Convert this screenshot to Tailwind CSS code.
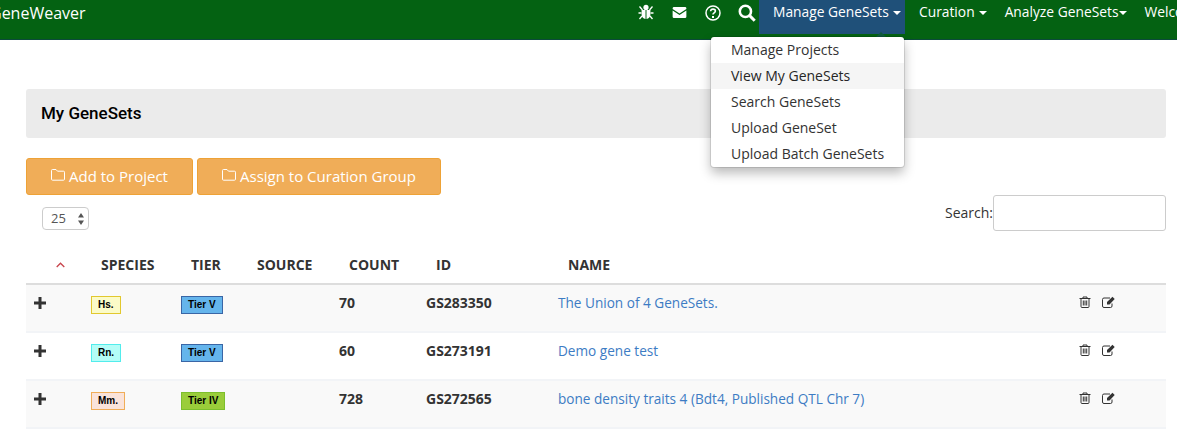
<!DOCTYPE html>
<html lang="en">

<head>
    <meta charset="UTF-8" />
    <title>My GeneSets - GeneWeaver</title>
    <meta name="viewport" content="width=device-width, initial-scale=1.0" />
    <script src="https://cdn.jsdelivr.net/npm/@tailwindcss/browser@4"></script>
</head>

<body class="bg-white text-[#333] font-['Open_Sans',sans-serif] text-sm overflow-hidden h-[429px]">
    <!-- Top navbar -->
    <nav class="relative flex justify-between h-10 bg-[#046212] border-b border-[#0b4a3a] text-white">
        <div class="-ml-[10px] pt-[3px] text-[16px] leading-[20px]">GeneWeaver</div>
        <div class="flex items-start w-[542px] shrink-0 overflow-hidden whitespace-nowrap text-[13.8px]">
            <!-- bug -->
            <svg class="mt-[4px] ml-[3px] w-[16px] h-[16px] shrink-0" viewBox="0 0 16 16" fill="#fff">
                <circle cx="8" cy="3.4" r="2.6" />
                <path d="M3.6 6h3.9v9C5.2 14.800 3.600 12.800 3.600 10.500zM8.500 6h3.900v4.500c0 2.300-1.600 4.300-3.900 4.500z" />
                <path d="M1.500 2.500l3 3.500M14.500 2.500l-3 3.500M.5 9h3M12.500 9h3M1.500 15l2.500-3M14.500 15L12 12" stroke="#fff" stroke-width="1.300" fill="none" />
            </svg>
            <!-- envelope -->
            <svg class="mt-[7px] ml-[18px] w-[15px] h-[11px] shrink-0" viewBox="0 0 15 12" fill="#fff">
                <path d="M1.500 0h12A1.500 1.500 0 0 1 15 1.500v.6L7.500 7 0 2.100v-.6A1.500 1.500 0 0 1 1.500 0z" />
                <path d="M0 3.800l7.500 4.900L15 3.800v6.700a1.500 1.500 0 0 1-1.500 1.500h-12A1.500 1.500 0 0 1 0 10.500z" />
            </svg>
            <!-- question -->
            <svg class="mt-[5px] ml-[18px] w-[16px] h-[16px] shrink-0" viewBox="0 0 16 16" fill="none" stroke="#fff">
                <circle cx="8" cy="8" r="7" stroke-width="1.500" />
                <path d="M5.600 6.300C5.700 4.900 6.700 4.100 8 4.100c1.400 0 2.400.9 2.400 2 0 1.900-2.400 1.800-2.400 3.500" stroke-width="1.600" />
                <path d="M7 11h2v1.900H7z" fill="#fff" stroke="none" />
            </svg>
            <!-- search -->
            <svg class="mt-[4px] ml-[17px] w-[18px] h-[18px] shrink-0" viewBox="0 0 17 17" fill="none" stroke="#fff">
                <circle cx="7" cy="7" r="5.300" stroke-width="2.400" />
                <path d="M11 11l4.800 4.800" stroke-width="2.800" />
            </svg>
            <div class="ml-[3px] flex items-start gap-[4px] h-[34px] w-[146px] pl-[14px] pt-[3px] bg-[#1f5079] leading-[18px] shrink-0">Manage GeneSets
                <span class="mt-[8px] border-x-[4px] border-x-transparent border-t-[4px] border-t-white"></span>
            </div>
            <div class="ml-[14px] flex items-start gap-[4px] pt-[3px] leading-[18px] shrink-0">Curation
                <span class="mt-[8px] border-x-[4px] border-x-transparent border-t-[4px] border-t-white"></span>
            </div>
            <div class="ml-[18px] flex items-start pt-[3px] leading-[18px] shrink-0">Analyze GeneSets
                <span class="mt-[8px] ml-[1px] border-x-[4px] border-x-transparent border-t-[4px] border-t-white"></span>
            </div>
            <div class="ml-[17px] pt-[3px] leading-[18px] shrink-0">Welcome</div>
        </div>

        <!-- Dropdown -->
        <span class="absolute left-[876px] top-[32px] border-x-[5px] border-x-transparent border-b-[5px] border-b-[#0f5a3e]"></span>
        <ul class="absolute left-[711px] top-[37px] w-[193px] h-[130px] bg-white rounded-[3px] shadow-[0_6px_12px_rgba(0,0,0,0.28)] ring-1 ring-black/10 text-[#333] text-sm leading-[26px] z-10">
            <li class="pl-[20px]">Manage Projects</li>
            <li class="pl-[20px] bg-[#f5f5f5] text-[#262626]">View My GeneSets</li>
            <li class="pl-[20px]">Search GeneSets</li>
            <li class="pl-[20px]">Upload GeneSet</li>
            <li class="pl-[20px]">Upload Batch GeneSets</li>
        </ul>
    </nav>

    <main class="pl-[26px] pr-[11px]">
        <div class="mt-[49px] h-[49px] flex items-center pl-[15px] bg-[#ebebeb] rounded-[3px] text-black font-['Roboto',sans-serif] font-medium text-[17px]">My GeneSets</div>

        <!-- Action buttons -->
        <div class="mt-[20px] flex gap-1 text-white text-[15px] font-medium">
            <button class="w-[167px] h-[37px] pt-[1px] flex items-center justify-center gap-[4px] bg-[#f0ad58] border border-[#eea236] rounded-[3px]">
                <svg class="w-[14px] h-[12px] -mt-[4px]" viewBox="0 0 14 12" fill="none" stroke="#fff"><path d="M1.500.5h3.500l1.500 1.700h6a1 1 0 0 1 1 1v7a1 1 0 0 1-1 1h-11a1 1 0 0 1-1-1v-8.700a1 1 0 0 1 1-1z" /></svg>
                Add to Project
            </button>
            <button class="w-[244px] h-[37px] pt-[1px] flex items-center justify-center gap-[4px] bg-[#f0ad58] border border-[#eea236] rounded-[3px]">
                <svg class="w-[14px] h-[12px] -mt-[4px]" viewBox="0 0 14 12" fill="none" stroke="#fff"><path d="M1.500.5h3.500l1.500 1.700h6a1 1 0 0 1 1 1v7a1 1 0 0 1-1 1h-11a1 1 0 0 1-1-1v-8.700a1 1 0 0 1 1-1z" /></svg>
                Assign to Curation Group
            </button>
        </div>

        <!-- Length and search -->
        <div class="flex justify-between h-[36px]">
            <div class="mt-[12px] ml-[16px] w-[47px] h-[23px] flex items-center justify-between pl-[8px] pr-[4px] border border-[#ccc] rounded-[4px] text-[#555] text-[13px]">25
                <svg class="w-[6px] h-[12px]" viewBox="0 0 6 12" fill="#555"><path d="M3 0l3 4.500H0zM3 12L0 7.500h6z" /></svg>
            </div>
            <div class="flex items-center h-[36px]">
                <label>Search:</label>
                <div class="w-[173px] h-[36px] border border-[#ccc] rounded-[3px] bg-white"></div>
            </div>
        </div>

        <!-- GeneSets table -->
        <table class="mt-[14px] w-full table-fixed border-separate border-spacing-0">
            <colgroup>
                <col class="w-[55px]" /><col class="w-[90px]" /><col class="w-[76px]" /><col class="w-[82px]" /><col class="w-[87px]" /><col class="w-[132px]" /><col /><col class="w-[97px]" />
            </colgroup>
            <thead>
                <tr class="text-left font-bold text-sm [&>th]:h-[40px] [&>th]:border-b-2 [&>th]:border-[#ddd] [&>th]:pl-[20px] [&>th]:pt-[2px]">
                    <th><svg class="w-[9px] h-[6px] ml-[10px]" viewBox="0 0 9 6" fill="none" stroke="#c8444c" stroke-width="1.300"><path d="M.7 5l3.800-3.800L8.300 5" /></svg></th>
                    <th>SPECIES</th>
                    <th>TIER</th>
                    <th class="!pl-[10px]">SOURCE</th>
                    <th>COUNT</th>
                    <th>ID</th>
                    <th>NAME</th>
                    <th></th>
                </tr>
            </thead>
            <tbody class="[&_td]:h-[48px] [&_td]:border-b-2 [&_td]:border-[#f2f4f7] [&_td]:align-top [&_td]:pt-[8px] [&_td]:pl-[10px]">
                <tr class="bg-[#f9f9f9]">
                    <td class="!pl-[8px]"><svg class="w-3 h-3 mt-[4px]" viewBox="0 0 12 12" fill="#333"><path d="M4.500 0h3v4.500H12v3H7.500V12h-3V7.500H0v-3h4.500z" /></svg></td>
                    <td><span class="inline-block mt-[3px] h-[18px] px-[6px] border border-[#e2c82e] bg-[#fbfbc8] text-black font-['Liberation_Sans',sans-serif] font-bold text-[10px] leading-[16px]">Hs.</span></td>
                    <td><span class="inline-block mt-[3px] h-[18px] px-[6px] border border-[#3a66a6] bg-[#65b5ec] text-black font-['Liberation_Sans',sans-serif] font-bold text-[10px] leading-[16px]">Tier V</span></td>
                    <td></td>
                    <td class="font-bold">70</td>
                    <td class="font-bold">GS283350</td>
                    <td class="text-[#3d7cc4] text-[13.6px]">The Union of 4 GeneSets.</td>
                    <td>
                        <div class="flex gap-[11px] mt-[3px]">
                            <svg class="w-[12px] h-[12px]" viewBox="0 0 12 12" fill="none" stroke="#333"><path d="M.5 2.500h11M4 2.500V1h4v1.500M2 2.500v8a1 1 0 0 0 1 1h6a1 1 0 0 0 1-1v-8M4.300 4.500v5M6 4.500v5M7.700 4.500v5" /></svg>
                            <svg class="w-[14px] h-[12px]" viewBox="0 0 14 12" fill="none" stroke="#333"><path d="M10 7.500v2.500a1.500 1.500 0 0 1-1.500 1.500h-6.500a1.500 1.500 0 0 1-1.500-1.500v-6.500a1.500 1.500 0 0 1 1.500-1.500h6" /><path d="M5 6l5.500-5.200 2.200 2.200L7.500 8.400H5z" fill="#333" stroke="none" /></svg>
                        </div>
                    </td>
                </tr>
                <tr>
                    <td class="!pl-[8px]"><svg class="w-3 h-3 mt-[4px]" viewBox="0 0 12 12" fill="#333"><path d="M4.500 0h3v4.500H12v3H7.500V12h-3V7.500H0v-3h4.500z" /></svg></td>
                    <td><span class="inline-block mt-[3px] h-[18px] px-[6px] border border-[#52ecec] bg-[#b4fdf7] text-black font-['Liberation_Sans',sans-serif] font-bold text-[10px] leading-[16px]">Rn.</span></td>
                    <td><span class="inline-block mt-[3px] h-[18px] px-[6px] border border-[#3a66a6] bg-[#65b5ec] text-black font-['Liberation_Sans',sans-serif] font-bold text-[10px] leading-[16px]">Tier V</span></td>
                    <td></td>
                    <td class="font-bold">60</td>
                    <td class="font-bold">GS273191</td>
                    <td class="text-[#3d7cc4] text-[13.6px]">Demo gene test</td>
                    <td>
                        <div class="flex gap-[11px] mt-[3px]">
                            <svg class="w-[12px] h-[12px]" viewBox="0 0 12 12" fill="none" stroke="#333"><path d="M.5 2.500h11M4 2.500V1h4v1.500M2 2.500v8a1 1 0 0 0 1 1h6a1 1 0 0 0 1-1v-8M4.300 4.500v5M6 4.500v5M7.700 4.500v5" /></svg>
                            <svg class="w-[14px] h-[12px]" viewBox="0 0 14 12" fill="none" stroke="#333"><path d="M10 7.500v2.500a1.500 1.500 0 0 1-1.500 1.500h-6.500a1.500 1.500 0 0 1-1.500-1.500v-6.500a1.500 1.500 0 0 1 1.500-1.500h6" /><path d="M5 6l5.500-5.200 2.200 2.200L7.500 8.400H5z" fill="#333" stroke="none" /></svg>
                        </div>
                    </td>
                </tr>
                <tr class="bg-[#f9f9f9]">
                    <td class="!pl-[8px]"><svg class="w-3 h-3 mt-[4px]" viewBox="0 0 12 12" fill="#333"><path d="M4.500 0h3v4.500H12v3H7.500V12h-3V7.500H0v-3h4.500z" /></svg></td>
                    <td><span class="inline-block mt-[3px] h-[18px] px-[6px] border border-[#f0ad58] bg-[#fae3da] text-black font-['Liberation_Sans',sans-serif] font-bold text-[10px] leading-[16px]">Mm.</span></td>
                    <td><span class="inline-block mt-[3px] h-[18px] px-[6px] border border-[#7cbf2c] bg-[#9acd3a] text-black font-['Liberation_Sans',sans-serif] font-bold text-[10px] leading-[16px]">Tier IV</span></td>
                    <td></td>
                    <td class="font-bold">728</td>
                    <td class="font-bold">GS272565</td>
                    <td class="text-[#3d7cc4] text-[13.6px]">bone density traits 4 (Bdt4, Published QTL Chr 7)</td>
                    <td>
                        <div class="flex gap-[11px] mt-[3px]">
                            <svg class="w-[12px] h-[12px]" viewBox="0 0 12 12" fill="none" stroke="#333"><path d="M.5 2.500h11M4 2.500V1h4v1.500M2 2.500v8a1 1 0 0 0 1 1h6a1 1 0 0 0 1-1v-8M4.300 4.500v5M6 4.500v5M7.700 4.500v5" /></svg>
                            <svg class="w-[14px] h-[12px]" viewBox="0 0 14 12" fill="none" stroke="#333"><path d="M10 7.500v2.500a1.500 1.500 0 0 1-1.500 1.500h-6.500a1.500 1.500 0 0 1-1.500-1.500v-6.500a1.500 1.500 0 0 1 1.500-1.500h6" /><path d="M5 6l5.500-5.200 2.200 2.200L7.500 8.400H5z" fill="#333" stroke="none" /></svg>
                        </div>
                    </td>
                </tr>
            </tbody>
        </table>
    </main>
</body>

</html>
